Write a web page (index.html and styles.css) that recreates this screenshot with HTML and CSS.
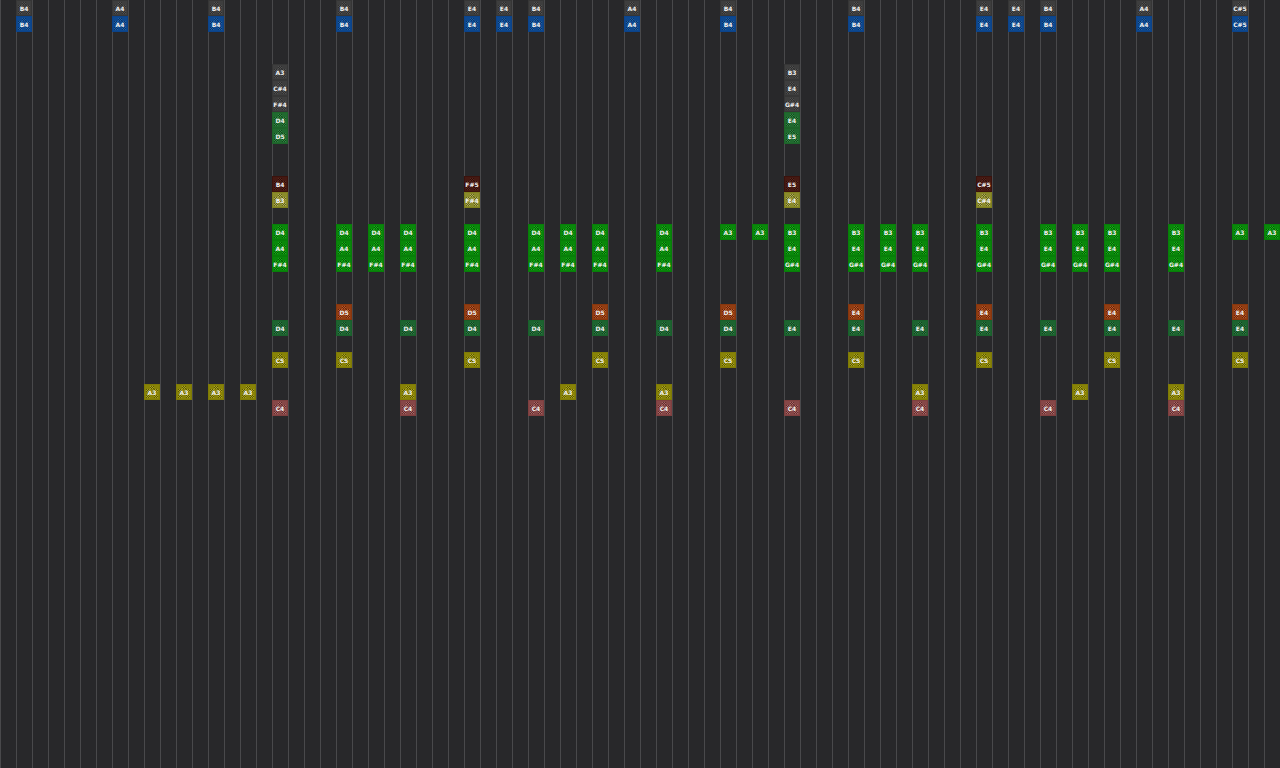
FILE: index.html
```html
<!DOCTYPE html>
<html lang="en">
<head>
  <meta charset="UTF-8">
  <title>Note Editor</title>
  <link rel="stylesheet" href="styles.css">
</head>
<body>

  <main class="roll" id="roll"></main>

  <script src="script.js"></script>

</body>
</html>
```

FILE: styles.css
```css
* {
  margin: 0;
  padding: 0;
  box-sizing: border-box;
}

body {
  background-color: #28282a;
  font-family: "DejaVu Sans", Verdana, sans-serif;
  overflow: hidden;
}

/* one vertical line per tick */
.roll {
  display: grid;
  grid-auto-columns: 16px;
  grid-auto-rows: 16px;
  min-height: 100vh;
  align-content: start;
  background-image: linear-gradient(to right, #49494b 1px, transparent 1px);
  background-size: 16px 100%;
}

.note {
  display: flex;
  align-items: center;
  justify-content: center;
  border: 1px solid var(--edge);
  box-shadow: inset 0 0 0 1px var(--mid);
  color: #f0f0f0;
  font-size: 6px;
  font-weight: bold;
  line-height: 8px;
  padding-top: 2px;
  /* speckled block face */
  background-image:
    repeating-conic-gradient(transparent 0 25%, var(--mid) 0 50%),
    repeating-conic-gradient(var(--dark) 0 25%, var(--light) 0 50%);
  background-position: 1px 1px, 0 0;
  background-size: 8px 6px, 2px 2px;
}

.gray {
  --edge: #363636;
  --mid: #3e3e3e;
  --light: #505050;
  --dark: #2e2e2e;
}

.blue {
  --edge: #0b438a;
  --mid: #0d488f;
  --light: #1f5fa5;
  --dark: #0a3466;
}

.green {
  --edge: #1d6429;
  --mid: #206a2f;
  --light: #318a42;
  --dark: #14441e;
}

.pine {
  --edge: #19602b;
  --mid: #1d6430;
  --light: #2c7d42;
  --dark: #134120;
}

.maroon {
  --edge: #3b120c;
  --mid: #451912;
  --light: #5a271e;
  --dark: #2c0d08;
}

.olive {
  --edge: #7f801e;
  --mid: #8a8b2b;
  --light: #b0af55;
  --dark: #5e5d1c;
}

.lime {
  --edge: #077f08;
  --mid: #09880a;
  --light: #17b018;
  --dark: #065806;
}

.orange {
  --edge: #87360d;
  --mid: #923d12;
  --light: #b8552a;
  --dark: #632508;
}

.yellow {
  --edge: #7f7b05;
  --mid: #888307;
  --light: #aaa51f;
  --dark: #595504;
}

.pink {
  --edge: #7f3f3f;
  --mid: #864747;
  --light: #a96464;
  --dark: #5e2d2d;
}
```

FILE: script.js
```js
const roll = document.getElementById('roll');

// each layer: row, colour, and notes written as "key: ticks"
const layers = [
  [0, 'gray', { 'B4': [1, 13, 21, 33, 45, 53, 65], 'A4': [7, 39, 71], 'E4': [29, 31, 61, 63], 'C#5': [77] }],
  [1, 'blue', { 'B4': [1, 13, 21, 33, 45, 53, 65], 'A4': [7, 39, 71], 'E4': [29, 31, 61, 63], 'C#5': [77] }],
  [4, 'gray', { 'A3': [17], 'B3': [49] }],
  [5, 'gray', { 'C#4': [17], 'E4': [49] }],
  [6, 'gray', { 'F#4': [17], 'G#4': [49] }],
  [7, 'green', { 'D4': [17], 'E4': [49] }],
  [8, 'green', { 'D5': [17], 'E5': [49] }],
  [11, 'maroon', { 'B4': [17], 'F#5': [29], 'E5': [49], 'C#5': [61] }],
  [12, 'olive', { 'B3': [17], 'F#4': [29], 'E4': [49], 'C#4': [61] }],
  [14, 'lime', { 'D4': [17, 21, 23, 25, 29, 33, 35, 37, 41], 'A3': [45, 47, 77, 79], 'B3': [49, 53, 55, 57, 61, 65, 67, 69, 73] }],
  [15, 'lime', { 'A4': [17, 21, 23, 25, 29, 33, 35, 37, 41], 'E4': [49, 53, 55, 57, 61, 65, 67, 69, 73] }],
  [16, 'lime', { 'F#4': [17, 21, 23, 25, 29, 33, 35, 37, 41], 'G#4': [49, 53, 55, 57, 61, 65, 67, 69, 73] }],
  [19, 'orange', { 'D5': [21, 29, 37, 45], 'E4': [53, 61, 69, 77] }],
  [20, 'pine', { 'D4': [17, 21, 25, 29, 33, 37, 41, 45], 'E4': [49, 53, 57, 61, 65, 69, 73, 77] }],
  [22, 'yellow', { 'C5': [17, 21, 29, 37, 45, 53, 61, 69, 77] }],
  [24, 'yellow', { 'A3': [9, 11, 13, 15, 25, 35, 41, 57, 67, 73] }],
  [25, 'pink', { 'C4': [17, 25, 33, 41, 49, 57, 65, 73] }]
];

layers.forEach(([row, color, notes]) => {
  Object.keys(notes).forEach(key => {
    notes[key].forEach(tick => {
      const note = document.createElement('div');
      note.className = 'note ' + color;
      note.style.gridRow = row + 1;
      note.style.gridColumn = tick + 1;
      note.textContent = key;
      roll.appendChild(note);
    });
  });
});
```
